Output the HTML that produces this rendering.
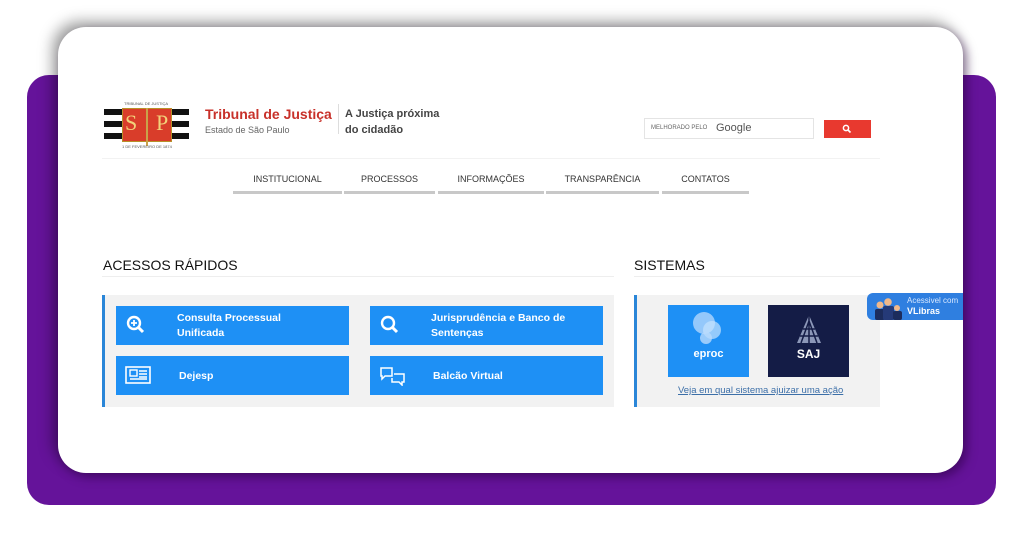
<!DOCTYPE html>
<html><head><meta charset="utf-8"><style>
*{margin:0;padding:0;box-sizing:border-box}
body{width:1024px;height:536px;background:#fff;position:relative;overflow:hidden;font-family:"Liberation Sans","DejaVu Sans",sans-serif}
.abs{position:absolute}
.purple{left:27px;top:75px;width:969px;height:430px;background:#65139a;border-radius:22px}
.card{left:58px;top:27px;width:905px;height:446px;background:#fff;border-radius:28px;box-shadow:-6px -6px 14px rgba(0,0,0,.35),4px 4px 10px rgba(40,0,60,.5)}
.t{position:absolute;white-space:nowrap}
.navbar{position:absolute;top:191px;height:3px;background:#c8c8c8}
.nav{position:absolute;top:174px;font-size:9px;color:#333;text-align:center}
.btn{position:absolute;background:#1e90f5;color:#fff;font-weight:bold;font-size:10.5px;height:39px}
.btn span{position:absolute;line-height:15px}
</style></head><body>
<div class="abs purple"></div>
<div class="abs card"></div>

<div class="abs" style="left:104px;top:109px;width:85px;height:6px;background:#111"></div>
<div class="abs" style="left:104px;top:121px;width:85px;height:6px;background:#111"></div>
<div class="abs" style="left:104px;top:133px;width:85px;height:6px;background:#111"></div>
<div class="abs" style="left:122px;top:108px;width:50px;height:34px;background:#d93d2a;border:1px solid #b8902a"></div>
<div class="t" style="left:125px;top:108px;font-family:'Liberation Serif',serif;font-size:22px;color:#f2d27a;line-height:30px">S</div>
<div class="t" style="left:156px;top:108px;font-family:'Liberation Serif',serif;font-size:22px;color:#f2d27a;line-height:30px">P</div>
<div class="abs" style="left:146px;top:108px;width:2px;height:38px;background:#c9a24a"></div>
<div class="t" style="left:124px;top:101px;font-size:4px;color:#555">TRIBUNAL DE JUSTIÇA</div>
<div class="t" style="left:122px;top:144px;font-size:4px;color:#555">1 DE FEVEREIRO DE 1874</div>

<div class="t" style="left:205px;top:106px;font-size:14px;font-weight:bold;color:#c8312a">Tribunal de Justiça</div>
<div class="t" style="left:205px;top:125px;font-size:9px;color:#666">Estado de São Paulo</div>
<div class="abs" style="left:338px;top:104px;width:1px;height:30px;background:#ddd"></div>
<div class="t" style="left:345px;top:106px;font-size:11px;font-weight:bold;color:#444;line-height:16px">A Justiça próxima<br>do cidadão</div>

<div class="abs" style="left:644px;top:118px;width:170px;height:21px;border:1px solid #e4e4e4"></div>
<div class="t" style="left:651px;top:125px;font-size:6px;color:#666">MELHORADO PELO</div>
<div class="t" style="left:716px;top:122px;font-size:11px;color:#555">Google</div>
<div class="abs" style="left:824px;top:120px;width:47px;height:18px;background:#e8392f"></div>
<svg class="abs" style="left:842px;top:124px" width="10" height="10" viewBox="0 0 10 10"><circle cx="4" cy="4" r="2.6" fill="none" stroke="#fff" stroke-width="1.5"/><path d="M6 6L8.5 8.5" stroke="#fff" stroke-width="1.6"/></svg>
<div class="abs" style="left:102px;top:158px;width:778px;height:1px;background:#f2f2f2"></div>

<div class="nav" style="left:233px;width:109px">INSTITUCIONAL</div>
<div class="nav" style="left:344px;width:91px">PROCESSOS</div>
<div class="nav" style="left:438px;width:106px">INFORMAÇÕES</div>
<div class="nav" style="left:546px;width:113px">TRANSPARÊNCIA</div>
<div class="nav" style="left:662px;width:87px">CONTATOS</div>
<div class="navbar" style="left:233px;width:109px"></div>
<div class="navbar" style="left:344px;width:91px"></div>
<div class="navbar" style="left:438px;width:106px"></div>
<div class="navbar" style="left:546px;width:113px"></div>
<div class="navbar" style="left:662px;width:87px"></div>

<div class="t" style="left:103px;top:257px;font-size:14px;color:#111">ACESSOS RÁPIDOS</div>
<div class="abs" style="left:102px;top:276px;width:512px;height:1px;background:#eee"></div>
<div class="t" style="left:634px;top:257px;font-size:14px;color:#111">SISTEMAS</div>
<div class="abs" style="left:634px;top:276px;width:246px;height:1px;background:#eee"></div>

<div class="abs" style="left:102px;top:295px;width:512px;height:112px;background:#f2f2f2;border-left:3px solid #2a86d8"></div>
<div class="btn" style="left:116px;top:306px;width:233px"><span style="left:61px;top:5px">Consulta Processual<br>Unificada</span></div>
<div class="btn" style="left:370px;top:306px;width:233px"><span style="left:61px;top:5px">Jurisprudência e Banco de<br>Sentenças</span></div>
<div class="btn" style="left:116px;top:356px;width:233px"><span style="left:63px;top:13px">Dejesp</span></div>
<div class="btn" style="left:370px;top:356px;width:233px"><span style="left:63px;top:13px">Balcão Virtual</span></div>
<svg class="abs" style="left:126px;top:315px" width="20" height="20" viewBox="0 0 20 20"><circle cx="8" cy="8" r="6" fill="none" stroke="#fff" stroke-width="2.4"/><path d="M12.5 12.5L17 17" stroke="#fff" stroke-width="3"/><path d="M8 5v6M5 8h6" stroke="#fff" stroke-width="1.8"/></svg>
<svg class="abs" style="left:380px;top:315px" width="20" height="20" viewBox="0 0 20 20"><circle cx="8" cy="8" r="6" fill="none" stroke="#fff" stroke-width="2.4"/><path d="M12.5 12.5L17 17" stroke="#fff" stroke-width="3"/></svg>
<svg class="abs" style="left:125px;top:366px" width="26" height="18" viewBox="0 0 26 18"><rect x="1" y="1" width="24" height="16" fill="none" stroke="#fff" stroke-width="1.6"/><rect x="5" y="4" width="7" height="6" fill="none" stroke="#fff" stroke-width="1.4"/><path d="M14 5h8M14 8h8M14 11h8M5 13h17" stroke="#fff" stroke-width="1.4"/></svg>
<svg class="abs" style="left:380px;top:366px" width="26" height="20" viewBox="0 0 26 20"><path d="M1 2h11v8H5l-3 3v-3H1z" fill="none" stroke="#fff" stroke-width="1.5"/><path d="M14 8h10v8h-2v3l-3-3h-7v-4" fill="none" stroke="#fff" stroke-width="1.5"/></svg>

<div class="abs" style="left:634px;top:295px;width:246px;height:112px;background:#f2f2f2;border-left:3px solid #2a86d8"></div>
<div class="abs" style="left:668px;top:305px;width:81px;height:72px;background:#1e90f5"></div>
<svg class="abs" style="left:688px;top:310px" width="40" height="40" viewBox="0 0 40 40"><circle cx="16" cy="13" r="11" fill="#a9d2fb" opacity=".85"/><circle cx="24" cy="20" r="9" fill="#c6e2fd" opacity=".7"/><circle cx="18" cy="28" r="6" fill="#b8dafc" opacity=".8"/></svg>
<div class="t" style="left:668px;top:348px;width:81px;text-align:center;font-size:11px;font-weight:bold;color:#fff">eproc</div>
<div class="abs" style="left:768px;top:305px;width:81px;height:72px;background:#141c46"></div>
<svg class="abs" style="left:791px;top:313px" width="36" height="32" viewBox="0 0 36 32"><path d="M18 2L30 30H6z" fill="#8c97b8"/><path d="M18 2v28M12 16h12M9 23h18M18 8L26 30M18 8L10 30" stroke="#141c46" stroke-width="1.5"/></svg>
<div class="t" style="left:768px;top:347px;width:81px;text-align:center;font-size:12px;font-weight:bold;color:#fff">SAJ</div>
<div class="t" style="left:678px;top:385px;font-size:9.5px;color:#3c6fa8;text-decoration:underline">Veja em qual sistema ajuizar uma ação</div>

<div class="abs" style="left:867px;top:293px;width:96px;height:27px;background:#2f7fe0;border-radius:6px 0 0 6px"></div>
<svg class="abs" style="left:872px;top:295px" width="32" height="25" viewBox="0 0 32 25"><circle cx="8" cy="10" r="3.5" fill="#f0b88a"/><rect x="3" y="14" width="10" height="11" rx="2" fill="#1c2c5c"/><circle cx="16" cy="7" r="3.8" fill="#f0b88a"/><rect x="11" y="11" width="11" height="14" rx="2" fill="#253a78"/><circle cx="25" cy="13" r="3" fill="#f0b88a"/><rect x="21" y="16" width="9" height="9" rx="2" fill="#1c2c5c"/></svg>
<div class="t" style="left:907px;top:296px;font-size:8px;color:#d8e8ff">Acessivel com</div>
<div class="t" style="left:907px;top:306px;font-size:9px;font-weight:bold;color:#fff">VLibras</div>
</body></html>
